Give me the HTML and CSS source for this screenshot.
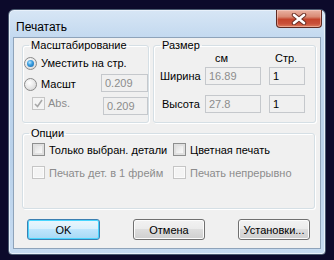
FILE: index.html
```html
<!DOCTYPE html>
<html lang="ru">
<head>
  <meta charset="utf-8">
  <title>Печатать</title>
  <link rel="stylesheet" href="styles.css">
</head>
<body>

<div class="window">
  <div class="titlebar">
    <span class="title">Печатать</span>
    <span class="close">
      <svg width="16" height="12" viewBox="0 0 16 12">
        <path d="M3 2 L13 10 M13 2 L3 10" stroke="#6b2f25" stroke-width="4.5" stroke-linecap="round"/>
        <path d="M3 2 L13 10 M13 2 L3 10" stroke="#fff" stroke-width="2.6" stroke-linecap="round"/>
      </svg>
    </span>
  </div>

  <div class="client">
    <div class="toprow">
      <fieldset class="group scale">
        <legend>Масштабирование</legend>
        <div class="row r1">
          <span class="radio on"></span><span class="lbl">Уместить на стр.</span>
        </div>
        <div class="row r2">
          <span class="radio"></span><span class="lbl">Масшт</span>
          <span class="field f1 dim">0.209</span>
        </div>
        <div class="row r3">
          <span class="check off checked"><svg width="11" height="11" viewBox="0 0 11 11"><path d="M2 6 L4.5 8.5 L9 2" fill="none" stroke="#a8a8a8" stroke-width="1.6"/></svg></span><span class="lbl dim">Abs.</span>
          <span class="field f2 dim">0.209</span>
        </div>
      </fieldset>

      <fieldset class="group size">
        <legend>Размер</legend>
        <div class="heads">
          <span class="h-cm">см</span>
          <span class="h-pg">Стр.</span>
        </div>
        <div class="srow">
          <span class="slbl">Ширина</span>
          <span class="field cm dim">16.89</span>
          <span class="field pg">1</span>
        </div>
        <div class="srow">
          <span class="slbl indent">Высота</span>
          <span class="field cm dim">27.8</span>
          <span class="field pg">1</span>
        </div>
      </fieldset>
    </div>

    <fieldset class="group options">
      <legend>Опции</legend>
      <div class="orow">
        <div class="opt"><span class="check"></span><span class="lbl">Только выбран. детали</span></div>
        <div class="opt"><span class="check"></span><span class="lbl">Цветная печать</span></div>
      </div>
      <div class="orow">
        <div class="opt"><span class="check off"></span><span class="lbl dim">Печать дет. в 1 фрейм</span></div>
        <div class="opt"><span class="check off"></span><span class="lbl dim">Печать непрерывно</span></div>
      </div>
    </fieldset>

    <div class="buttons">
      <span class="btn default">OK</span>
      <span class="btn">Отмена</span>
      <span class="btn">Установки...</span>
    </div>
  </div>
</div>

</body>
</html>
```

FILE: styles.css
```css
html, body {margin: 0; padding: 0;}
body {width: 334px; height: 260px; background: #0c0a2b; font-family: "Liberation Sans", Arial, sans-serif; font-size: 11px; color: #000; overflow: hidden;}

.window {margin: 9px 0 0 8px; width: 318px; height: 246px; box-sizing: border-box; border: 1px solid #4a5a70; border-radius: 6px 6px 4px 4px; background: linear-gradient(180deg, #d7e6f5 0%, #c2d8ef 12%, #b9d1ea 60%, #c6dbf1 100%); box-shadow: inset 0 0 0 1px #e8f1fb; display: flex; flex-direction: column;}

.titlebar {height: 27px; display: flex; align-items: flex-start; padding: 0 3px 0 7px;}
.title {font-size: 12px; margin-top: 10px; color: #000;}
.close {margin-left: auto; width: 46px; height: 18px; box-sizing: border-box; border: 1px solid #5e2a22; border-top: none; border-radius: 0 0 4px 4px; background: linear-gradient(180deg, #eab3a3 0%, #d98a74 40%, #c4452c 55%, #c9503a 80%, #dc7d5c 100%); display: flex; align-items: center; justify-content: center; box-shadow: inset 0 0 0 1px rgba(255,220,210,.45);}
.close svg {display: block;}

.client {margin: 0 4px 5px 4px; height: 212px; box-sizing: border-box; border: 1px solid #8ea3ba; background: #f0f0f0; padding: 1px 4px 0 8px;}

.toprow {display: flex; gap: 4px;}

.group {margin: 0; padding: 0; border: 1px solid #d5dfe5; border-radius: 3px; box-shadow: inset 1px 1px 0 #fff, 1px 1px 0 #fff; min-width: 0; box-sizing: border-box;}
.group legend {margin-left: 6px; padding: 0 2px; line-height: 13px; height: 13px;}

.scale {width: 127px; height: 84px;}
.size {width: 163px; height: 84px;}
.options {width: 293px; height: 82px; margin-top: 4px;}

.row {display: flex; align-items: center; height: 18px;}
.r1 {margin-top: 2px;}
.r2 {margin-top: 3px;}
.r3 {margin-top: 4px; align-items: flex-start;}

.radio {width: 13px; height: 13px; box-sizing: border-box; border-radius: 50%; border: 1px solid #8a8a8a; background: radial-gradient(circle at 40% 35%, #ffffff 0%, #eaeaea 45%, #cfcfcf 100%); margin-left: 1px; margin-right: 2px; position: relative; flex: none;}
.radio.on::after {content: ""; position: absolute; left: 2px; top: 2px; width: 7px; height: 7px; border-radius: 50%; background: radial-gradient(circle at 40% 35%, #bfe7ff 0%, #3b9fe0 40%, #0e5fa8 100%);}

.check {width: 13px; height: 13px; box-sizing: border-box; border: 1px solid #8e8f8f; background: linear-gradient(135deg, #d9d9d9 0%, #f2f2f2 60%, #ffffff 100%); box-shadow: inset 0 0 0 2px #e0e0e0; flex: none; display: flex; align-items: center; justify-content: center;}
.check.off {border-color: #c5c5c5; background: #f4f4f4; box-shadow: inset 0 0 0 1px #fbfbfb;}
.check.checked {box-shadow: none;}
.check svg {display: block;}

.lbl {margin-left: 2px; white-space: nowrap;}
.dim {color: #8c8c8c;}

.field {height: 18px; box-sizing: border-box; border: 1px solid #c5c8cc; background: #f0f0f0; padding: 1px 0 0 3px; line-height: 15px; white-space: nowrap;}
.f1 {width: 47px; margin-left: auto; margin-top: -2px;}
.f2 {width: 45px; margin-left: auto;}
.r3 .check {margin-left: 9px;}
.r3 .lbl {margin-left: 3px; line-height: 13px;}

.heads {display: flex; height: 13px; line-height: 13px;}
.h-cm {margin-left: 61px; width: 30px;}
.h-pg {margin-left: 30px;}
.srow {display: flex; align-items: center; height: 18px; margin-top: 2px;}
.srow + .srow {margin-top: 10px;}
.slbl {width: 45px; margin-left: 6px;}
.slbl.indent {margin-left: 8px; width: 43px;}
.field.cm {width: 56px; margin-left: 0;}
.field.pg {width: 36px; margin-left: 8px; color: #000;}

.orow {display: flex; height: 13px; margin-top: 3px;}
.orow + .orow {margin-top: 10px;}
.opt {display: flex; align-items: center; width: 154px;}
.opt:first-child {margin-left: 9px;}
.opt .lbl {margin-left: 4px;}

.buttons {display: flex; margin-top: 10px; padding-left: 5px;}
.btn {height: 21px; box-sizing: border-box; border: 1px solid #707070; border-radius: 3px; background: linear-gradient(180deg, #f2f2f2 0%, #ebebeb 49%, #dddddd 50%, #cfcfcf 100%); box-shadow: inset 0 0 0 1px #fcfcfc; display: flex; align-items: center; justify-content: center; width: 72px;}
.btn + .btn {margin-left: 33px;}
.btn.default {width: 73px; border-color: #3c7fb1; background: linear-gradient(180deg, #eaf6fd 0%, #d9f0fc 49%, #bee6fd 50%, #a7d9f5 100%); box-shadow: inset 0 0 0 1px #48d6ff;}
```
